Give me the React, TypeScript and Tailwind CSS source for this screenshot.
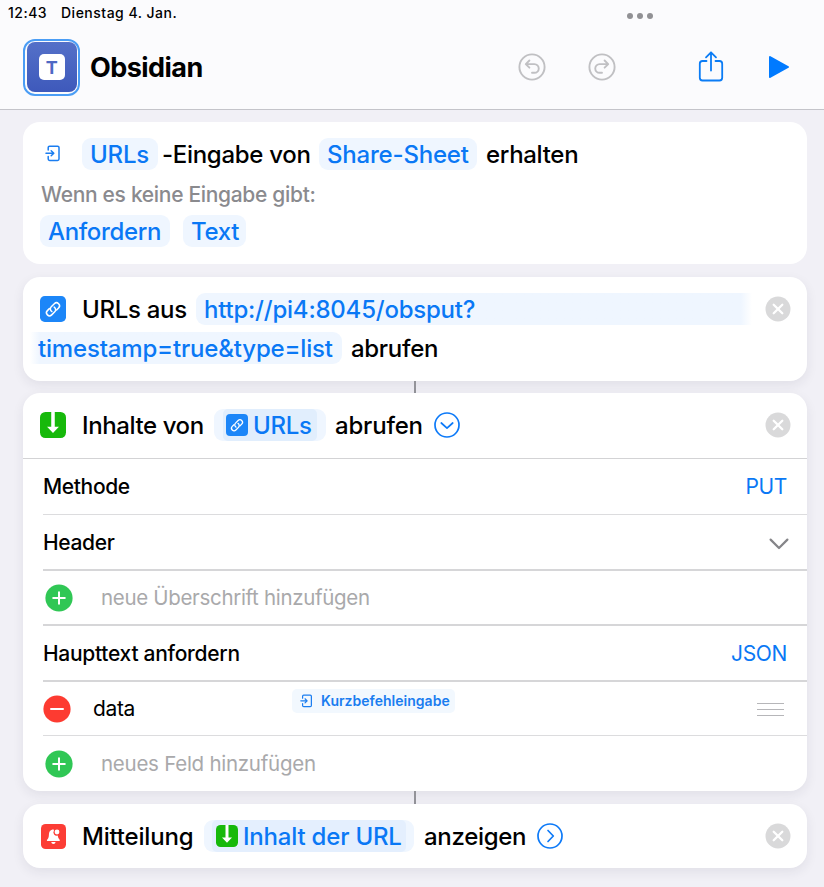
import type { ReactNode } from 'react';

function InputIcon({ className }: { className: string }) {
  return (
    <svg viewBox="0 0 16 17" className={className} fill="none" stroke="#1a7df0" strokeWidth="1.5" strokeLinecap="round" strokeLinejoin="round">
      <path d="M3.2 5V2.6Q3.2 1.2 4.6 1.2H12.6Q14 1.2 14 2.6V14Q14 15.4 12.6 15.4H4.6Q3.2 15.4 3.2 14V11.6" />
      <path d="M1 8.3H8.6M6.2 5.8L8.8 8.3L6.2 10.8" />
    </svg>
  );
}

function LinkIcon({ className }: { className: string }) {
  return (
    <svg viewBox="0 0 25 25" className={className}>
      <rect width="25" height="25" rx="4.6" fill="#1c86f8" />
      <g transform="rotate(-45 12.5 12.8)" fill="none" stroke="#fff" strokeWidth="1.45" strokeLinecap="round">
        <path d="M10.5 9.9H7.8a2.9 2.9 0 0 0 0 5.8H12a2.9 2.9 0 0 0 2.8-3.6" />
        <path d="M14.5 15.7H17.2a2.9 2.9 0 0 0 0-5.8H13a2.9 2.9 0 0 0-2.8 3.6" />
      </g>
    </svg>
  );
}

function DownIcon({ className }: { className: string }) {
  return (
    <svg viewBox="0 0 25 25" className={className}>
      <rect width="25" height="25" rx="5.2" fill="#17b90b" />
      <path d="M10.8 0H14.2V14.3H18.2L12.5 20.2L6.8 14.3H10.8Z" fill="#fff" />
    </svg>
  );
}

function BellIcon() {
  return (
    <svg viewBox="0 0 25 25" className="size-[25px] shrink-0">
      <rect width="25" height="25" rx="4.6" fill="#fc3d35" />
      <path d="M12.3 5.3C9.2 5.7 7.9 8 7.9 10.7C7.9 13.6 7 14.6 6.1 15.7C5.6 16.4 6 17 6.8 17H17.9C18.7 17 19.1 16.4 18.6 15.7C17.7 14.6 16.9 13.6 16.8 11.6A3.3 3.3 0 0 1 13 6.6Z" fill="#fff" />
      <circle cx="16" cy="8" r="2.4" fill="#fff" />
      <path d="M10.2 18H14.6Q14.2 19.9 12.4 19.9Q10.6 19.9 10.2 18Z" fill="#fff" />
    </svg>
  );
}

function CloseIcon() {
  return (
    <svg viewBox="0 0 26 26" className="mr-4 mb-px ml-auto size-[26px] shrink-0">
      <circle cx="13" cy="13" r="12.5" fill="#d9d9da" />
      <path d="M8.7 8.7L17.3 17.3M17.3 8.7L8.7 17.3" stroke="#fff" strokeWidth="2.3" strokeLinecap="round" />
    </svg>
  );
}

function ChevronCircle({ right = false }: { right?: boolean }) {
  return (
    <svg viewBox="0 0 26 26" className="mb-px size-[26px] shrink-0" fill="none" stroke="#0d7af8" strokeWidth="1.7" strokeLinecap="round" strokeLinejoin="round">
      <circle cx="13" cy="13" r="12" />
      <path d={right ? 'M11 7.5L16.3 13L11 18.5' : 'M7.3 11L13 16.2L18.7 11'} />
    </svg>
  );
}

function RoundIcon({ plus = false }: { plus?: boolean }) {
  return (
    <svg viewBox="0 0 28 28" className="size-7 shrink-0">
      <circle cx="14" cy="14" r="13.6" fill={plus ? '#30c755' : '#fd3b31'} />
      <path d={plus ? 'M8.2 14H19.8M14 8.2V19.8' : 'M8 14H20'} stroke="#fff" strokeWidth="2" strokeLinecap="round" />
    </svg>
  );
}

function UndoIcon({ redo = false }: { redo?: boolean }) {
  return (
    <svg viewBox="0 0 28 28" className={redo ? 'size-7 -scale-x-100' : 'size-7'} fill="none" stroke="#c0c0c3" strokeWidth="1.9" strokeLinecap="round" strokeLinejoin="round">
      <circle cx="14" cy="14" r="12.6" />
      <path d="M11.4 7.5L7.8 11.1L11.4 14.7M8 11.1H16.4A4.3 4.3 0 0 1 16.4 19.8H14" />
    </svg>
  );
}

const CARD = 'flex w-[784px] shrink-0 flex-col rounded-[17px] bg-white';
const SHADOW = 'shadow-[0_4px_12px_rgba(40,40,70,0.08)]';
const CHIP = 'flex h-8 shrink-0 items-center rounded-[9px] bg-[#eff6ff] text-[#0a78f5]';

function Connector({ className }: { className: string }) {
  return (
    <div className={`flex w-[784px] shrink-0 justify-center ${className}`}>
      <div className="w-[2px] bg-[#939399]" />
    </div>
  );
}

function Row({ children, className }: { children: ReactNode; className: string }) {
  return <div className={`flex shrink-0 items-center ${className}`}>{children}</div>;
}

export default function App() {
  return (
    <div className="flex h-[887px] w-[824px] flex-col overflow-hidden whitespace-nowrap bg-[#f1f0f6] font-['Inter','Liberation_Sans',sans-serif] text-[24px] leading-[33px] font-medium tracking-[-0.3px] text-black">
      <header className="flex h-[110px] shrink-0 flex-col border-b border-[#c4c4ca] bg-[#fbfbfd]">
        <div className="flex h-[25px] items-center pl-2 text-[14px] leading-5 tracking-[0.5px]">
          <span className="w-[53px]">12:43</span>
          <span>Dienstag 4. Jan.</span>
          <span className="mr-[171px] ml-auto flex gap-1 pt-[6px]">
            <i className="size-[6px] rounded-full bg-[#919195]" />
            <i className="size-[6px] rounded-full bg-[#919195]" />
            <i className="size-[6px] rounded-full bg-[#919195]" />
          </span>
        </div>
        <div className="flex h-[84px] items-center pl-[23px]">
          <div className="flex size-[57px] items-center justify-center rounded-[12px] border-2 border-[#4a9df5]">
            <div className="flex size-[50px] items-center justify-center rounded-[8px] bg-linear-to-b from-[#5470c8] to-[#3e59bb]">
              <div className="flex size-[26px] items-center justify-center rounded-[5px] bg-white text-[18px] font-bold text-[#4e69c4]">T</div>
            </div>
          </div>
          <h1 className="ml-[10px] w-[428px] pt-px text-[27px] font-bold tracking-[-0.55px]">Obsidian</h1>
          <UndoIcon />
          <div className="w-[42px]" />
          <UndoIcon redo />
          <svg viewBox="0 0 26 32" className="ml-[82px] h-8 w-[26px]" fill="none" stroke="#0b7cf5" strokeWidth="1.8" strokeLinecap="round" strokeLinejoin="round">
            <path d="M8.5 10H4.5Q1.8 10 1.8 12.7V26.8Q1.8 29.5 4.5 29.5H21.5Q24.2 29.5 24.2 26.8V12.7Q24.2 10 21.5 10H17.5" />
            <path d="M13 19.5V1.5M8 6.3L13 1.3L18 6.3" />
          </svg>
          <svg viewBox="0 0 22 24" className="ml-11 h-6 w-[22px]">
            <path d="M2 2L20 12L2 22Z" fill="#007aff" stroke="#007aff" strokeWidth="2" strokeLinejoin="round" />
          </svg>
        </div>
      </header>

      <main className="flex grow flex-col pt-3 pl-[23px]">
        <section className={`${CARD} h-[142px] pt-4`}>
          <Row className="h-8 pl-[22px]">
            <InputIcon className="mr-[21px] mb-px h-[17px] w-4" />
            <span className={`${CHIP} w-[76px] pl-2 tracking-[-0.2px]`}>URLs</span>
            <span className="ml-1 w-[157px] pt-px">-Eingabe von</span>
            <span className={`${CHIP} w-[158px] pl-2 tracking-[-0.2px]`}>Share-Sheet</span>
            <span className="ml-[9px] pt-px">erhalten</span>
          </Row>
          <p className="mt-2 h-8 pl-[18px] text-[21px] tracking-[-0.32px] text-[#8a8a8e]">Wenn es keine Eingabe gibt:</p>
          <Row className="mt-[5px] gap-[13px] pl-[17px]">
            <span className={`${CHIP} w-[130px] pt-px pl-2 tracking-[-0.35px]`}>Anfordern</span>
            <span className={`${CHIP} w-[63px] pt-px pl-2`}>Text</span>
          </Row>
        </section>

        <section className={`${CARD} ${SHADOW} mt-[13px] h-[104px] pt-4`}>
          <Row className="h-8 pl-[17px]">
            <LinkIcon className="mb-px size-[26px]" />
            <span className="ml-4 w-[114px] pt-px">URLs aus</span>
            <span className="flex h-8 w-[556px] items-center rounded-l-[9px] bg-linear-to-r from-[#eff6ff] from-[98%] to-white pt-px pl-2 tracking-[-0.22px] text-[#0a78f5]">http://pi4:8045/obsput?</span>
            <CloseIcon />
          </Row>
          <Row className="mt-[7px] h-8 pl-[7px]">
            <span className="flex h-8 w-[312px] items-center rounded-r-[9px] bg-linear-to-r from-white to-[#eff6ff] to-[3%] pt-px pl-2 tracking-[-0.17px] text-[#0a78f5]">timestamp=true&amp;type=list</span>
            <span className="ml-[9px] pt-px">abrufen</span>
          </Row>
        </section>

        <Connector className="h-3" />

        <section className={`${CARD} ${SHADOW} h-[398px]`}>
          <Row className="h-[66px] border-b border-[#d3d3d5] pl-[17px]">
            <DownIcon className="mb-px size-[26px]" />
            <span className="ml-4 w-[132px] tracking-[-0.4px]">Inhalte von</span>
            <span className={`${CHIP} mb-px w-[112px] px-[9px]`}>
              <span className="flex h-8 w-[94px] items-center rounded-[5px] bg-[#e1eefd] pl-[3px]">
                <LinkIcon className="mr-[5px] size-[22px]" />
                URLs
              </span>
            </span>
            <span className="ml-[9px] w-[99px] tracking-[-0.2px]">abrufen</span>
            <ChevronCircle />
            <CloseIcon />
          </Row>
          <div className="flex flex-col pl-5 text-[21px] tracking-[-0.35px]">
            <Row className="h-14 justify-between border-b border-[#dcdcde] pr-5">
              <span>Methode</span>
              <span className="font-normal text-[#0a78f5]">PUT</span>
            </Row>
            <Row className="h-14 justify-between border-b-2 border-[#d6d6d8] pr-[18px]">
              <span className="pt-px">Header</span>
              <svg viewBox="0 0 20 12" className="mt-[3px] h-3 w-5" fill="none" stroke="#858589" strokeWidth="2.2" strokeLinecap="round" strokeLinejoin="round">
                <path d="M1.6 1.6L10 10L18.4 1.6" />
              </svg>
            </Row>
            <Row className="h-[55px] border-b-2 border-[#d6d6d8] pl-[2px] text-[20.5px] font-normal tracking-[-0.32px] text-[#a9a9ab]">
              <RoundIcon plus />
              <span className="ml-7">neue Überschrift hinzufügen</span>
            </Row>
            <Row className="h-14 justify-between border-b-2 border-[#d6d6d8] pr-5">
              <span className="pt-px tracking-[-0.28px]">Haupttext anfordern</span>
              <span className="pt-px font-normal text-[#0a78f5]">JSON</span>
            </Row>
            <Row className="h-[54px] border-b border-[#dcdcde]">
              <RoundIcon />
              <span className="ml-[22px] w-[199px] font-normal">data</span>
              <span className="mb-4 flex h-6 w-[163px] items-center rounded-[5px] bg-[#f2f8fe] pl-2 text-[14px] font-semibold tracking-[0.02px] text-[#1a7df0]">
                <InputIcon className="mr-2 h-[14px] w-[13px]" />
                Kurzbefehleingabe
              </span>
              <span className="mt-px mr-[23px] ml-auto flex w-[27px] flex-col gap-[5px]">
                <i className="h-px bg-[#b6b6b9]" />
                <i className="h-px bg-[#b6b6b9]" />
                <i className="h-px bg-[#b6b6b9]" />
              </span>
            </Row>
            <Row className="h-[55px] pl-[2px] text-[20.5px] font-normal tracking-[-0.26px] text-[#a9a9ab]">
              <RoundIcon plus />
              <span className="ml-7">neues Feld hinzufügen</span>
            </Row>
          </div>
        </section>

        <Connector className="h-[13px]" />

        <section className={`${CARD} ${SHADOW} h-[64px]`}>
          <Row className="h-16 pl-[18px]">
            <BellIcon />
            <span className="ml-4 w-[122px] pt-px tracking-[-0.2px]">Mitteilung</span>
            <span className={`${CHIP} w-[210px] px-2`}>
              <span className="flex h-8 w-[195px] items-center rounded-[5px] bg-[#e4effe] pl-1 tracking-[-0.2px]">
                <DownIcon className="mr-[5px] size-[22px]" />
                Inhalt der URL
              </span>
            </span>
            <span className="ml-[10px] w-[113px] pt-px">anzeigen</span>
            <ChevronCircle right />
            <CloseIcon />
          </Row>
        </section>
      </main>
    </div>
  );
}
